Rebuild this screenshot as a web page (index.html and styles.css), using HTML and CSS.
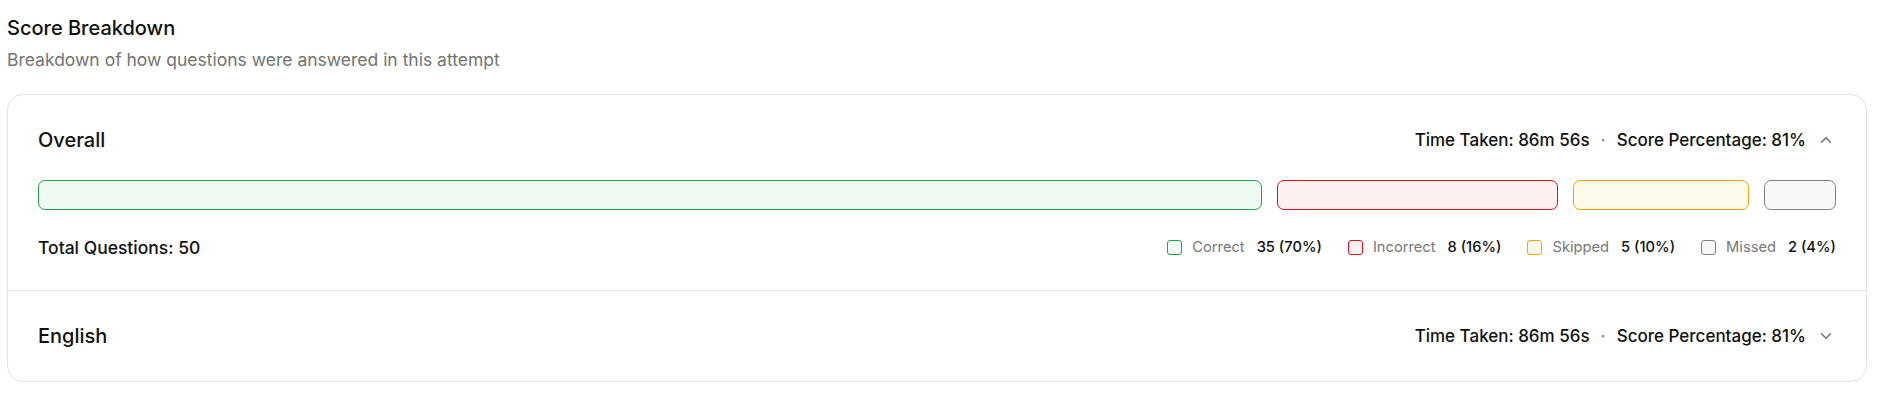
FILE: index.html
```html
<!DOCTYPE html>
<html lang="en">
<head>
<meta charset="utf-8">
<title>Score Breakdown</title>
<link rel="stylesheet" href="styles.css">
</head>
<body>
<main class="page">
  <header class="section-head">
    <h2 class="title">Score Breakdown</h2>
    <p class="subtitle">Breakdown of how questions were answered in this attempt</p>
  </header>

  <div class="card">
    <section class="item item-open">
      <div class="item-head">
        <span class="item-name">Overall</span>
        <div class="item-meta">
          <span>Time Taken: 86m 56s</span>
          <span class="dot">·</span>
          <span>Score Percentage: 81%</span>
          <svg class="chev" viewBox="0 0 12 12" width="12" height="12" aria-hidden="true"><path d="M1.5 8.2 L6 3.8 L10.5 8.2" fill="none" stroke="#6b6b6b" stroke-width="1.3" stroke-linecap="round" stroke-linejoin="round"/></svg>
        </div>
      </div>

      <div class="bar">
        <div class="seg seg-correct" style="flex-grow:70"></div>
        <div class="seg seg-incorrect" style="flex-grow:16"></div>
        <div class="seg seg-skipped" style="flex-grow:10"></div>
        <div class="seg seg-missed" style="flex-grow:4"></div>
      </div>

      <div class="item-foot">
        <span class="total">Total Questions: 50</span>
        <ul class="legend">
          <li class="legend-item"><span class="swatch seg-correct"></span><span class="legend-label">Correct</span><span class="legend-value">35 (70%)</span></li>
          <li class="legend-item"><span class="swatch seg-incorrect"></span><span class="legend-label">Incorrect</span><span class="legend-value">8 (16%)</span></li>
          <li class="legend-item"><span class="swatch seg-skipped"></span><span class="legend-label">Skipped</span><span class="legend-value">5 (10%)</span></li>
          <li class="legend-item"><span class="swatch seg-missed"></span><span class="legend-label">Missed</span><span class="legend-value">2 (4%)</span></li>
        </ul>
      </div>
    </section>

    <section class="item">
      <div class="item-head">
        <span class="item-name">English</span>
        <div class="item-meta">
          <span>Time Taken: 86m 56s</span>
          <span class="dot">·</span>
          <span>Score Percentage: 81%</span>
          <svg class="chev" viewBox="0 0 12 12" width="12" height="12" aria-hidden="true"><path d="M1.5 3.8 L6 8.2 L10.5 3.8" fill="none" stroke="#6b6b6b" stroke-width="1.3" stroke-linecap="round" stroke-linejoin="round"/></svg>
        </div>
      </div>
    </section>
  </div>
</main>
</body>
</html>
```

FILE: styles.css
```css
* { box-sizing: border-box; }

html, body {
  margin: 0;
  background: #ffffff;
}

body {
  font-family: "Inter", "Noto Sans", "Liberation Sans", sans-serif;
  color: #111111;
}

.page {
  padding: 14px 19px 0 7px;
}

.section-head {
  display: flex;
  flex-direction: column;
  gap: 6px;
  margin-bottom: 22px;
}

.title {
  margin: 0;
  font-size: 20px;
  line-height: 28px;
  font-weight: 500;
  color: #111111;
}

.subtitle {
  margin: 0;
  font-size: 17.5px;
  line-height: 24px;
  font-weight: 400;
  color: #737373;
}

.card {
  border: 1px solid #e4e4e4;
  border-radius: 16px;
  background: #ffffff;
}

.item {
  padding: 30px 30px;
  display: flex;
  flex-direction: column;
}

.item-open {
  padding-bottom: 31px;
}

.item + .item {
  border-top: 1px solid #e4e4e4;
}

.item-head {
  display: flex;
  align-items: center;
  justify-content: space-between;
  height: 30px;
}

.item-name {
  font-size: 20px;
  font-weight: 500;
  color: #111111;
}

.item-meta {
  display: flex;
  align-items: center;
  font-size: 17px;
  font-weight: 500;
  color: #111111;
}

.dot {
  margin: 0 11px;
  color: #888888;
}

.chev {
  margin-left: 14px;
  margin-right: 4px;
}

.bar {
  display: flex;
  gap: 15px;
  margin-top: 25px;
  height: 30px;
}

.seg {
  flex-basis: 0;
  border-radius: 7px;
  border-width: 1px;
  border-style: solid;
}

.seg-correct { background: #effbf2; border-color: #22a04b; }
.seg-incorrect { background: #fdf0f1; border-color: #e0101f; }
.seg-skipped { background: #fefaea; border-color: #f4a30c; }
.seg-missed { background: #f8f8f8; border-color: #828282; }

.item-foot {
  display: flex;
  align-items: center;
  justify-content: space-between;
  margin-top: 25px;
  height: 24px;
}

.total {
  font-size: 17.5px;
  font-weight: 500;
  color: #111111;
}

.legend {
  list-style: none;
  margin: 0;
  padding: 0;
  display: flex;
  align-items: center;
  gap: 26px;
}

.legend-item {
  display: flex;
  align-items: center;
  font-size: 14.7px;
}

.swatch {
  width: 15px;
  height: 15px;
  border-radius: 3px;
  border-width: 1px;
  border-style: solid;
  margin-right: 10px;
}

.legend-label {
  color: #777777;
  margin-right: 12px;
}

.legend-value {
  color: #111111;
  font-weight: 500;
}
```
